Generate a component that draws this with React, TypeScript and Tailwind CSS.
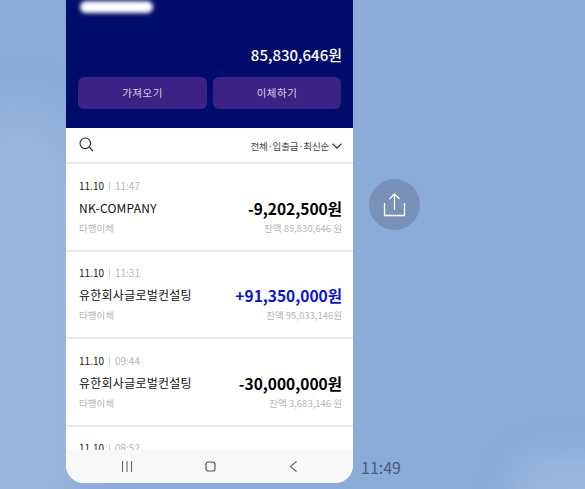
const FONT = "font-['Noto_Sans_CJK_KR','Noto_Sans',sans-serif]";

interface Tx {
  date: string;
  time: string;
  name: string;
  amount: string;
  balance: string;
  income?: boolean;
}

const ROWS: Tx[] = [
  { date: "11.10", time: "11:47", name: "NK-COMPANY", amount: "-9,202,500원", balance: "잔액 85,830,646 원" },
  { date: "11.10", time: "11:31", name: "유한회사글로벌컨설팅", amount: "+91,350,000원", balance: "잔액 95,033,146원", income: true },
  { date: "11.10", time: "09:44", name: "유한회사글로벌컨설팅", amount: "-30,000,000원", balance: "잔액 3,683,146 원" },
];

export default function App() {
  return (
    <div className={`relative flex h-[489px] w-[585px] overflow-hidden bg-[#8babd9] ${FONT}`}>
      {/* 배경 구름 */}
      <div className="absolute left-[-40px] top-[110px] h-[420px] w-[120px] rounded-full bg-[#9bb6de] blur-[22px]" />
      <div className="absolute left-[510px] top-[455px] h-[70px] w-[130px] rounded-full bg-[#9ab5de] blur-[14px]" />

      <div className="relative ml-[66px] flex h-[483px] w-[287px] flex-col overflow-hidden rounded-b-[18px] bg-white">
        <div className="flex h-[128px] shrink-0 flex-col bg-[#000c6b] pl-[12px] pr-[11px]">
          <div className="ml-[2px] mt-[1px] h-[12px] w-[73px] rounded-full bg-white blur-[2px]" />
          <div className="mt-[30px] text-right text-[15px] font-medium leading-[24px] text-white">85,830,646원</div>
          <div className="mt-[10px] flex gap-[6px]">
            <button className="h-[32px] w-[129px] rounded-[6px] bg-[#3d2185] text-[10.500px] tracking-[0.5px] text-[#d9d4ea]">가져오기</button>
            <button className="h-[32px] w-[128px] rounded-[6px] bg-[#3d2185] text-[10.500px] tracking-[0.5px] text-[#d9d4ea]">이체하기</button>
          </div>
        </div>

        <div className="flex h-[36px] shrink-0 items-center justify-between border-b-2 border-[#e8e8e8] pl-[13px] pr-[11px]">
          <svg width="15" height="15" viewBox="0 0 15 15" fill="none" stroke="#222" strokeWidth="1.1" className="mb-[2px]">
            <circle cx="6.3" cy="6.3" r="5.3" />
            <path d="M10.200 10.200 14 14" />
          </svg>
          <div className="flex items-center gap-[3px] pt-[2px] text-[9.500px] tracking-[-0.2px] text-[#444]">
            전체·입출금·최신순
            <svg width="10" height="6" viewBox="0 0 10 6" fill="none" stroke="#222" strokeWidth="1.1">
              <path d="M.5.7 5 5.200 9.500.7" />
            </svg>
          </div>
        </div>

        <div className="min-h-0 flex-1 overflow-hidden">
          {ROWS.map((row) => (
            <div key={row.time} className="h-[87.500px] border-b-2 border-[#e8e8e8] pl-[13px] pr-[11px] pt-[14.500px]">
              <div className="flex items-center text-[10px] leading-[14px] text-[#222]">
                {row.date}
                <span className="mx-[5px] h-[8px] w-px bg-[#ccc]" />
                <span className="text-[#b5b5b5]">{row.time}</span>
              </div>
              <div className="mt-[3px] flex items-center justify-between">
                <span className="text-[12px] tracking-[0.25px] text-[#111]">{row.name}</span>
                <span className={`text-[15.500px] font-bold leading-[24px] ${row.income ? "text-[#0a14c8]" : "text-black"}`}>{row.amount}</span>
              </div>
              <div className="mt-[1px] flex items-center justify-between text-[9.500px] leading-[14px] text-[#b5b5b5]">
                <span>타행이체</span>
                <span>{row.balance}</span>
              </div>
            </div>
          ))}
          <div className="flex items-center pl-[13px] pt-[14px] text-[10px] leading-[14px] text-[#222]">
            11.10
            <span className="mx-[5px] h-[8px] w-px bg-[#ccc]" />
            <span className="text-[#b5b5b5]">08:52</span>
          </div>
        </div>

        <div className="flex h-[33px] shrink-0 items-center justify-around bg-[#f8f8f8] px-[18.500px]">
          <svg width="12" height="11" viewBox="0 0 12 11" stroke="#666" strokeWidth="1.1"><path d="M1.500 0v11M6 0v11M10.500 0v11" /></svg>
          <svg width="11" height="11" viewBox="0 0 11 11" fill="none" stroke="#555" strokeWidth="1.2"><rect x="1" y="1" width="9" height="9" rx="2.500" /></svg>
          <svg width="9" height="11" viewBox="0 0 9 11" fill="none" stroke="#666" strokeWidth="1.1"><path d="M7.500.5 1.500 5.500l6 5" /></svg>
        </div>
      </div>

      <div className="ml-[8px] flex flex-col">
        <div className="ml-[8px] mt-[179px] flex h-[51px] w-[51px] items-center justify-center rounded-full bg-[#7991b8]">
          <svg width="23" height="24" viewBox="0 0 23 24" fill="none" stroke="white" strokeWidth="1.3">
            <path d="M11.500 17V1.500M6.500 6l5-5 5 5M1.500 10v12.500h20V10" />
          </svg>
        </div>
        <div className="mt-[225px] text-[16px] leading-[24px] text-[#4d5a78]">11:49</div>
      </div>
    </div>
  );
}
